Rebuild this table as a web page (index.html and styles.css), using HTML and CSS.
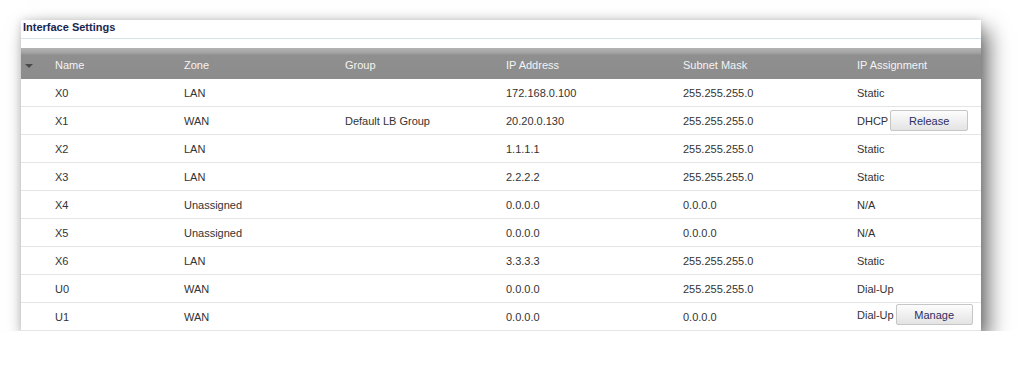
FILE: index.html
```html
<!DOCTYPE html>
<html lang="en">
<head>
    <meta charset="UTF-8">
    <meta name="viewport" content="width=device-width, initial-scale=1.0">
    <title>Interface Settings</title>
    <link rel="stylesheet" href="styles.css">
</head>
<body>
    <div class="panel">
        <div class="panel-title">Interface Settings</div>
        <div class="spacer"></div>
        <div class="grid head">
            <div class="sort"><span class="tri"></span></div>
            <div>Name</div>
            <div>Zone</div>
            <div>Group</div>
            <div>IP Address</div>
            <div>Subnet Mask</div>
            <div>IP Assignment</div>
        </div>
        <div class="grid row">
            <div></div><div>X0</div><div>LAN</div><div></div><div>172.168.0.100</div><div>255.255.255.0</div><div>Static</div>
        </div>
        <div class="grid row">
            <div></div><div>X1</div><div>WAN</div><div>Default LB Group</div><div>20.20.0.130</div><div>255.255.255.0</div>
            <div class="assign"><span>DHCP</span><button class="btn release">Release</button></div>
        </div>
        <div class="grid row">
            <div></div><div>X2</div><div>LAN</div><div></div><div>1.1.1.1</div><div>255.255.255.0</div><div>Static</div>
        </div>
        <div class="grid row">
            <div></div><div>X3</div><div>LAN</div><div></div><div>2.2.2.2</div><div>255.255.255.0</div><div>Static</div>
        </div>
        <div class="grid row">
            <div></div><div>X4</div><div>Unassigned</div><div></div><div>0.0.0.0</div><div>0.0.0.0</div><div>N/A</div>
        </div>
        <div class="grid row">
            <div></div><div>X5</div><div>Unassigned</div><div></div><div>0.0.0.0</div><div>0.0.0.0</div><div>N/A</div>
        </div>
        <div class="grid row">
            <div></div><div>X6</div><div>LAN</div><div></div><div>3.3.3.3</div><div>255.255.255.0</div><div>Static</div>
        </div>
        <div class="grid row">
            <div></div><div>U0</div><div>WAN</div><div></div><div>0.0.0.0</div><div>255.255.255.0</div><div>Dial-Up</div>
        </div>
        <div class="grid row">
            <div></div><div>U1</div><div>WAN</div><div></div><div>0.0.0.0</div><div>0.0.0.0</div>
            <div class="assign top"><span>Dial-Up</span><button class="btn manage">Manage</button></div>
        </div>
    </div>
</body>
</html>
```

FILE: styles.css
```css
body {
    margin: 0;
    background: #fff;
    font-family: "Liberation Sans", Arial, sans-serif;
    font-size: 11px;
    color: #333;
}
.panel {
    width: 960px;
    margin: 20px 0 0 21px;
    background: #fff;
    box-shadow: 0 0 8px rgba(0, 0, 0, 0.15), 8px 10px 20px rgba(0, 0, 0, 0.55);
}
.panel-title {
    height: 18px;
    line-height: 14px;
    padding-left: 2px;
    font-weight: bold;
    color: #19264f;
    border-bottom: 1px solid #d3e4ea;
}
.spacer { height: 9px; }

.grid {
    display: grid;
    grid-template-columns: 34px 129px 161px 161px 177px 174px 1fr;
    align-items: center;
}
.head {
    height: 31px;
    padding-top: 2px;
    box-sizing: border-box;
    color: #f4f4f4;
    background: linear-gradient(#b4b4b4 0, #a2a2a2 5px, #8f8f8f 7px, #8c8c8c 100%);
}
.sort { display: flex; align-items: center; padding-left: 4px; padding-top: 3px; }
.tri {
    width: 0;
    height: 0;
    border-left: 4px solid transparent;
    border-right: 4px solid transparent;
    border-top: 4px solid #4a4a4a;
}
.row {
    height: 27px;
    border-bottom: 1px solid #e4e4e4;
}
.assign { display: flex; align-items: center; }
.assign.top { align-items: flex-start; }
.assign.top span { padding-top: 1px; }
.btn {
    height: 21px;
    font-family: "Liberation Sans", Arial, sans-serif;
    font-size: 11px;
    color: #2d2d63;
    border: 1px solid #c6c6c6;
    border-radius: 2px;
    background: linear-gradient(#fdfdfd, #e3e3e3);
    padding: 0;
}
.release { width: 78px; margin-left: 2px; }
.manage { width: 77px; margin-left: 2px; margin-top: -4px; }
```
